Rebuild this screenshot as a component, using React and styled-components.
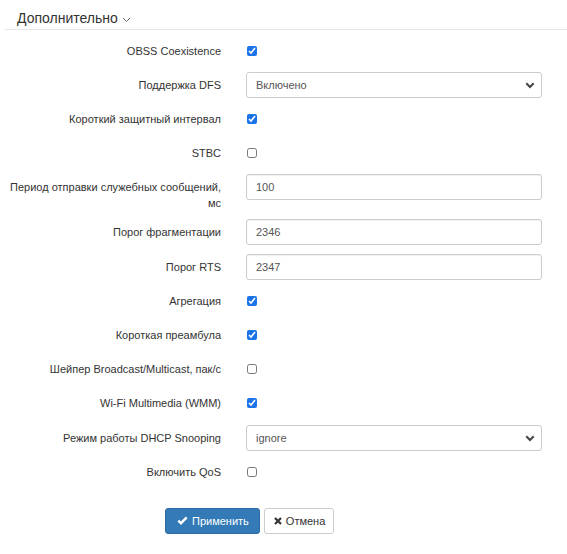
import styled, { createGlobalStyle } from "styled-components";

const GlobalStyle = createGlobalStyle`
  body {
    margin: 0;
    background: #fff;
    font-family: "Liberation Sans", Arial, sans-serif;
    color: #333;
  }
`;

const rows = [
  { label: "OBSS Coexistence", type: "check", checked: true },
  { label: "Поддержка DFS", type: "select", value: "Включено" },
  { label: "Короткий защитный интервал", type: "check", checked: true },
  { label: "STBC", type: "check", checked: false },
  { label: "Период отправки служебных сообщений, мс", type: "text", value: "100" },
  { label: "Порог фрагментации", type: "text", value: "2346" },
  { label: "Порог RTS", type: "text", value: "2347" },
  { label: "Агрегация", type: "check", checked: true },
  { label: "Короткая преамбула", type: "check", checked: true },
  { label: "Шейпер Broadcast/Multicast, пак/с", type: "check", checked: false },
  { label: "Wi-Fi Multimedia (WMM)", type: "check", checked: true },
  { label: "Режим работы DHCP Snooping", type: "select", value: "ignore" },
  { label: "Включить QoS", type: "check", checked: false },
];

const App = () => {
  return (
    <Page>
      <GlobalStyle />
      <Header>
        Дополнительно
        <svg width="9" height="6" viewBox="0 0 9 6">
          <polyline points="1,1 4.5,4.5 8,1" fill="none" stroke="#666" strokeWidth="1" />
        </svg>
      </Header>

      <Form>
        {rows.map((row) => (
          <Row key={row.label}>
            <Label>{row.label}</Label>
            <Control>
              {row.type === "check" && (
                <Checkbox type="checkbox" defaultChecked={row.checked} />
              )}
              {row.type === "text" && <Input type="text" defaultValue={row.value} />}
              {row.type === "select" && (
                <SelectWrap>
                  <Select defaultValue={row.value}>
                    <option>{row.value}</option>
                  </Select>
                  <Chevron width="10" height="7" viewBox="0 0 10 7">
                    <polyline points="1.3,1.3 5,5 8.7,1.3" fill="none" stroke="#444" strokeWidth="2" />
                  </Chevron>
                </SelectWrap>
              )}
            </Control>
          </Row>
        ))}
      </Form>

      <Actions>
        <Button $primary>
          <svg width="11" height="9" viewBox="0 0 11 9">
            <polyline points="1.3,4.6 4,7.2 9.7,1.4" fill="none" stroke="#fff" strokeWidth="2.4" />
          </svg>
          Применить
        </Button>
        <Button>
          <svg width="8" height="8" viewBox="0 0 8 8">
            <path d="M1 1 L7 7 M7 1 L1 7" stroke="#333" strokeWidth="2.2" />
          </svg>
          Отмена
        </Button>
      </Actions>
    </Page>
  );
};

const Page = styled.div`
  width: 567px;
  padding-bottom: 20px;
`;

const Header = styled.div`
  margin-left: 5px;
  padding: 10px 0 2px 12px;
  border-bottom: 1px solid #e5e5e5;
  font-size: 14px;
  line-height: 17px;
  color: #333;
  display: flex;
  align-items: center;
  gap: 4px;

  svg {
    margin-top: 2px;
  }
`;

const Form = styled.div`
  display: flex;
  flex-direction: column;
  gap: 8.2px;
  padding: 7.5px 25px 0 5px;
`;

const Row = styled.div`
  display: grid;
  grid-template-columns: 216px 1fr;
  column-gap: 25px;
  align-items: start;
`;

const Label = styled.div`
  text-align: right;
  font-size: 11px;
  line-height: 16px;
  padding-top: 5px;
  color: #333;
  min-height: 26px;
  box-sizing: border-box;
`;

const Control = styled.div`
  height: 26px;
  display: flex;
  align-items: center;
`;

const Checkbox = styled.input`
  width: 10px;
  height: 10px;
  margin: 0 0 0 1px;
  accent-color: #1a73e8;
`;

const Input = styled.input`
  box-sizing: border-box;
  width: 100%;
  height: 26px;
  border: 1px solid #ccc;
  border-radius: 3px;
  padding: 0 9px;
  font-family: "Liberation Sans", Arial, sans-serif;
  font-size: 11px;
  color: #555;
  box-shadow: inset 0 1px 1px rgba(0, 0, 0, 0.06);
  outline: none;
`;

const SelectWrap = styled.div`
  position: relative;
  width: 100%;
`;

const Select = styled.select`
  box-sizing: border-box;
  width: 100%;
  height: 26px;
  border: 1px solid #ccc;
  border-radius: 3px;
  padding: 0 9px;
  background: #fff;
  appearance: none;
  font-family: "Liberation Sans", Arial, sans-serif;
  font-size: 11px;
  color: #555;
  outline: none;
`;

const Chevron = styled.svg`
  position: absolute;
  right: 7px;
  top: 10px;
  pointer-events: none;
`;

const Actions = styled.div`
  display: flex;
  gap: 4px;
  padding-left: 165px;
  margin-top: 23px;
`;

const Button = styled.button`
  display: inline-flex;
  align-items: center;
  gap: 4px;
  height: 26px;
  padding: 0 ${(p) => (p.$primary ? "10px" : "8px")} 0 ${(p) => (p.$primary ? "11px" : "9px")};
  border-radius: 3px;
  border: 1px solid ${(p) => (p.$primary ? "#2e6da4" : "#ccc")};
  background: ${(p) => (p.$primary ? "#337ab7" : "#fff")};
  color: ${(p) => (p.$primary ? "#fff" : "#333")};
  font-family: "Liberation Sans", Arial, sans-serif;
  font-size: 11px;
  cursor: pointer;
`;

export default App;
